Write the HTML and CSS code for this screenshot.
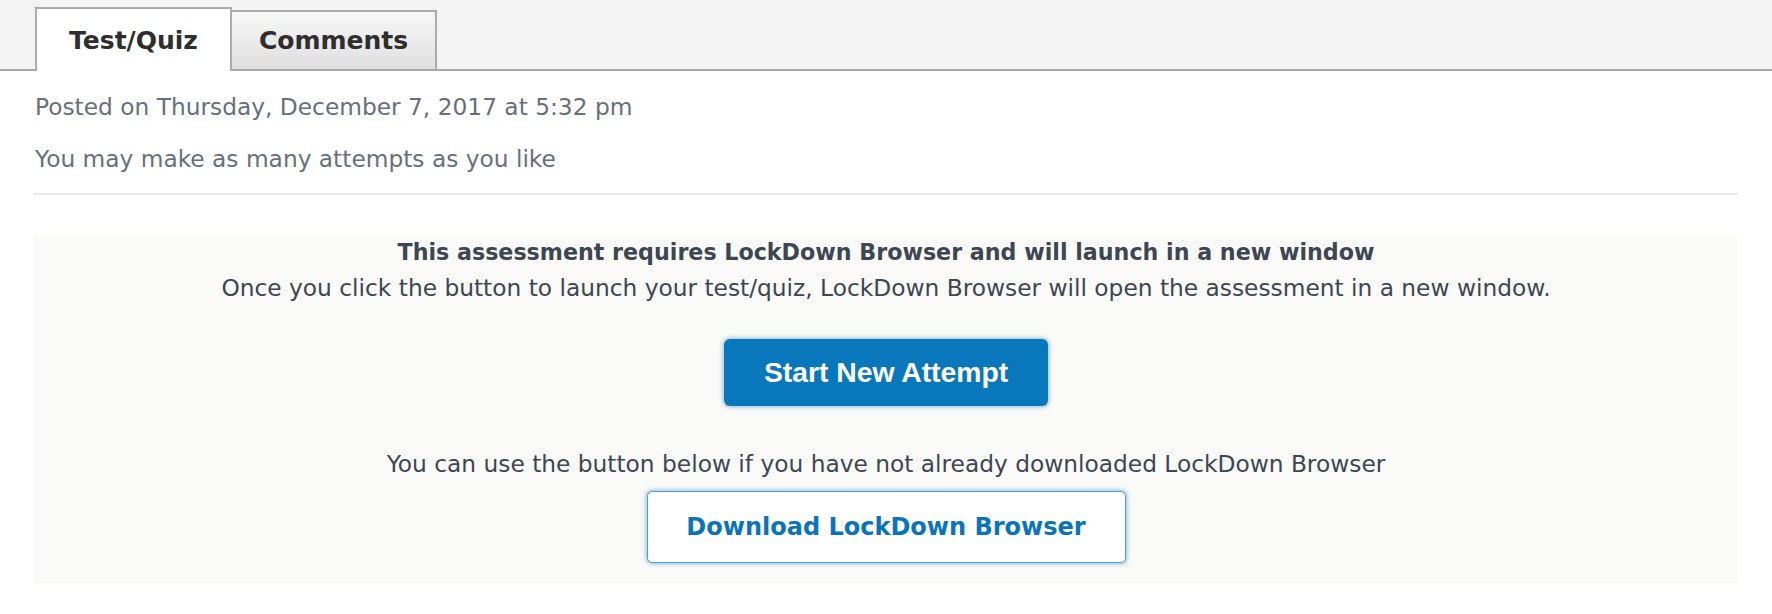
FILE: index.html
```html
<!DOCTYPE html>
<html lang="en">
<head>
<meta charset="utf-8">
<title>Test/Quiz</title>
<link rel="stylesheet" href="styles.css">
</head>
<body>
<div class="tabbar">
  <div class="tab tab-active">Test/Quiz</div>
  <div class="tab tab-inactive">Comments</div>
</div>
<main class="content">
  <p class="meta meta-first">Posted on Thursday, December 7, 2017 at 5:32 pm</p>
  <p class="meta">You may make as many attempts as you like</p>
  <hr class="rule">
  <section class="panel">
    <p class="panel-title">This assessment requires LockDown Browser and will launch in a new window</p>
    <p class="panel-text">Once you click the button to launch your test/quiz, LockDown Browser will open the assessment in a new window.</p>
    <button class="btn btn-primary" type="button">Start New Attempt</button>
    <p class="panel-text panel-note">You can use the button below if you have not already downloaded LockDown Browser</p>
    <button class="btn btn-secondary" type="button">Download LockDown Browser</button>
  </section>
</main>
</body>
</html>
```

FILE: styles.css
```css
* { box-sizing: border-box; }

body {
  margin: 0;
  background: #ffffff;
  font-family: "DejaVu Sans", "Verdana", sans-serif;
  font-size: 23.3px;
}

.tabbar {
  display: flex;
  align-items: flex-end;
  height: 71px;
  padding-left: 35px;
  background: #f4f4f4;
  border-bottom: 2px solid #a8a8a8;
}

.tab {
  display: flex;
  align-items: center;
  justify-content: center;
  font-weight: bold;
  font-size: 25px;
  color: #2e2e2e;
  border: 2px solid #ababab;
  border-bottom: none;
}

.tab-active {
  width: 197px;
  height: 64px;
  margin-bottom: -2px;
  background: #ffffff;
}

.tab-inactive {
  width: 205px;
  height: 59px;
  border-left: none;
  background: linear-gradient(#f7f7f7, #dfdfdf);
}

.content {
  padding: 0 34px;
}

.meta {
  margin: 24px 0 0;
  line-height: 28px;
  color: #66707c;
  padding-left: 1px;
}

.meta-first {
  margin-top: 22px;
}

.rule {
  margin: 20px 0 0;
  height: 2px;
  border: none;
  background: #e8e8e8;
}

.panel {
  margin-top: 40px;
  padding: 0 0 20px;
  background: #fafaf8;
  display: flex;
  flex-direction: column;
  align-items: center;
  color: #3d4653;
}

.panel-title,
.panel-text {
  margin: 0;
  line-height: 35px;
  text-align: center;
}

.panel-title {
  font-weight: bold;
  font-size: 22.2px;
}

.btn {
  display: flex;
  align-items: center;
  justify-content: center;
  font-weight: bold;
  cursor: pointer;
}

.btn-primary {
  margin-top: 34px;
  width: 324px;
  height: 67px;
  border: none;
  border-radius: 6px;
  background: #0877bc;
  color: #ffffff;
  font-family: "Liberation Sans", Arial, sans-serif;
  font-size: 28.3px;
  box-shadow: 0 0 4px 1px rgba(8, 110, 180, 0.45);
}

.panel-note {
  margin-top: 40px;
}

.btn-secondary {
  margin-top: 10px;
  width: 479px;
  height: 72px;
  border: 1px solid #4c9fd5;
  border-radius: 5px;
  background: #ffffff;
  color: #0a74bb;
  font-family: "DejaVu Sans", "Verdana", sans-serif;
  font-size: 24px;
  box-shadow: 0 0 4px 1px rgba(10, 116, 187, 0.45);
}
```
